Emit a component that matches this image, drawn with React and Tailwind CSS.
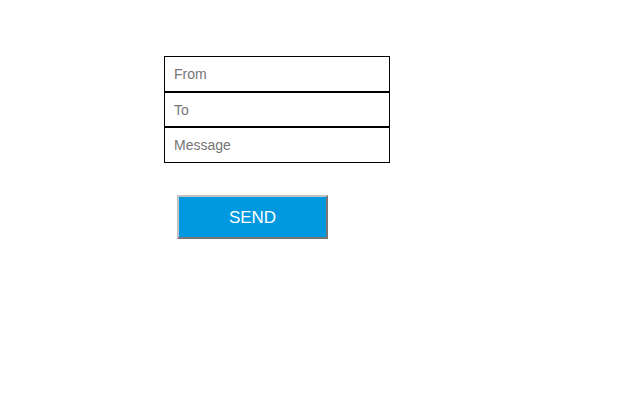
import React from 'react';

const fields = [
  { name: 'From', h: 'h-9' },
  { name: 'To', h: 'h-[35px]' },
  { name: 'Message', h: 'h-9' },
];

const App = () => {
  return (
    <div className="w-[640px] h-[400px] bg-white pl-[164px] pt-[56px] font-['Liberation_Sans',Arial,sans-serif]">
      {/* Campos apilados */}
      <form className="flex flex-col w-[226px]" onSubmit={(e) => e.preventDefault()}>
        {fields.map((f) => (
          <input
            key={f.name}
            type="text"
            placeholder={f.name}
            className={`block w-[226px] ${f.h} border border-black bg-white px-[9px] text-[14px] text-black placeholder:text-[#757575] outline-none`}
          />
        ))}
      </form>

      {/* Botón enviar */}
      <button
        type="button"
        className="mt-[32px] ml-[13px] w-[151px] h-[44px] bg-[#0099e0] border-2 border-t-[#c3c3c3] border-l-[#c3c3c3] border-r-[#767676] border-b-[#767676] text-white text-[17px] leading-none"
      >
        SEND
      </button>
    </div>
  );
};

export default App;
